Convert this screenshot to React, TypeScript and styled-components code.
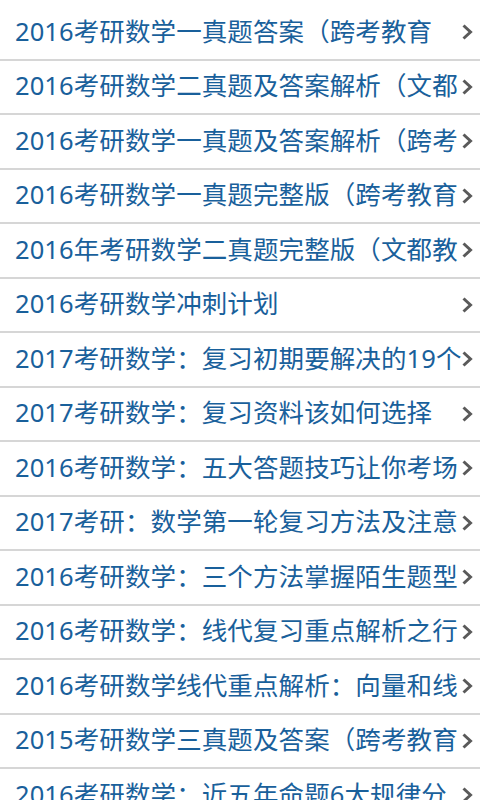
import React from "react";
import styled, { createGlobalStyle } from "styled-components";

const Global = createGlobalStyle`
  html, body { margin: 0; padding: 0; background: #ffffff; }
  body { font-family: "Noto Sans", "Noto Sans CJK SC", sans-serif; }
`;

const List = styled.ul`
  list-style: none;
  margin: 0;
  padding: 6px 0 0 0;
  width: 480px;
  height: 800px;
  overflow: hidden;
  background: #ffffff;
`;

const Row = styled.li`
  display: flex;
  align-items: center;
  height: 52.5px;
  border-bottom: 2px solid #d6d6d6;
  padding: 0 7px 0 15px;
`;

const Title = styled.span`
  flex: 1;
  min-width: 0;
  white-space: nowrap;
  font-family: "Noto Sans", "Noto Sans CJK SC", sans-serif;
  font-size: 25.5px;
  line-height: 36px;
  letter-spacing: 0.1px;
  color: #19609b;
  margin-top: -3px;
`;

const Chevron = styled.svg`
  flex: none;
  width: 12px;
  height: 16px;
  margin-left: 2px;
`;

const items = [
  "2016考研数学一真题答案（跨考教育",
  "2016考研数学二真题及答案解析（文都",
  "2016考研数学一真题及答案解析（跨考",
  "2016考研数学一真题完整版（跨考教育",
  "2016年考研数学二真题完整版（文都教",
  "2016考研数学冲刺计划",
  "2017考研数学：复习初期要解决的19个",
  "2017考研数学：复习资料该如何选择",
  "2016考研数学：五大答题技巧让你考场",
  "2017考研：数学第一轮复习方法及注意",
  "2016考研数学：三个方法掌握陌生题型",
  "2016考研数学：线代复习重点解析之行",
  "2016考研数学线代重点解析：向量和线",
  "2015考研数学三真题及答案（跨考教育",
  "2016考研数学：近五年命题6大规律分",
];

export default function App() {
  return (
    <>
      <Global />
      <List>
        {items.map((t, i) => (
          <Row key={i}>
            <Title>{t}</Title>
            <Chevron viewBox="0 0 12 16">
              <polyline
                points="2.5,1.5 9.5,8 2.5,14.5"
                fill="none"
                stroke="#5a5a5a"
                strokeWidth="3"
              />
            </Chevron>
          </Row>
        ))}
      </List>
    </>
  );
}
